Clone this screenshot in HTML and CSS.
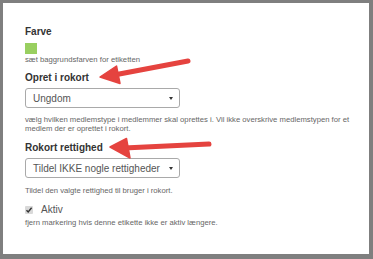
FILE: index.html
```html
<!DOCTYPE html>
<html>
<head>
<meta charset="utf-8">
<link rel="stylesheet" href="styles.css">
</head>
<body>
<div class="panel">
  <div class="label">Farve</div>
  <div class="swatch"></div>
  <div class="help help-tight">sæt baggrundsfarven for etiketten</div>

  <div class="label label-gap">Opret i rokort</div>
  <div class="select"><span class="select-text">Ungdom</span><span class="caret"></span></div>
  <div class="help help-gap">vælg hvilken medlemstype i medlemmer skal oprettes i. Vil ikke overskrive medlemstypen for et medlem der er oprettet i rokort.</div>

  <div class="label label-gap2">Rokort rettighed</div>
  <div class="select select-gap"><span class="select-text">Tildel IKKE nogle rettigheder</span><span class="caret"></span></div>
  <div class="help help-gap2">Tildel den valgte rettighed til bruger i rokort.</div>

  <div class="check-row">
    <span class="checkbox">
      <svg width="8" height="8" viewBox="0 0 8 8"><path d="M1.5 4.2 L3.2 6 L6.6 1.8" fill="none" stroke="#333" stroke-width="1.4"/></svg>
    </span>
    <span class="check-label">Aktiv</span>
  </div>
  <div class="help help-tight2">fjern markering hvis denne etikette ikke er aktiv længere.</div>
</div>
<svg class="arrows" width="373" height="259" viewBox="0 0 373 259">
  <g fill="#e5433f" stroke="#e5433f" stroke-linejoin="round" stroke-linecap="round">
    <line x1="188" y1="61" x2="114" y2="75" stroke-width="5"/>
    <polygon points="100,77 116.5,66 120,83.5" stroke-width="1.5"/>
    <line x1="209" y1="144" x2="124" y2="148" stroke-width="5"/>
    <polygon points="110,147 126.5,138.5 130,158" stroke-width="1.5"/>
  </g>
</svg>
</body>
</html>
```

FILE: styles.css
```css
html, body {
  margin: 0;
  padding: 0;
}
body {
  background: #7f7f7f;
  width: 373px;
  height: 259px;
  overflow: hidden;
  position: relative;
  font-family: "Liberation Sans", Arial, sans-serif;
}
.panel {
  box-sizing: border-box;
  margin: 3px 4px 0 3px;
  width: 366px;
  height: 251px;
  background: #fff;
  padding: 23px 0 0 22px;
}
.label {
  font-size: 10px;
  line-height: 12px;
  font-weight: bold;
  color: #333;
}
.label-gap { margin-top: 8px; }
.label-gap2 { margin-top: 9px; }
.swatch {
  margin-top: 5px;
  width: 12px;
  height: 11px;
  background: #99cf60;
}
.help {
  font-size: 7.7px;
  line-height: 9px;
  color: #666;
  width: 340px;
}
.help-tight { margin-top: 1px; }
.help-gap { margin-top: 7px; }
.help-gap2 { margin-top: 8px; }
.help-tight2 { margin-top: 2px; }
.select {
  box-sizing: border-box;
  margin-top: 4px;
  width: 155px;
  height: 20px;
  border: 1px solid #a9a9a9;
  border-radius: 3px;
  display: flex;
  align-items: center;
  justify-content: space-between;
  padding: 0 6px 0 7px;
}
.select-gap { margin-top: 4px; }
.select-text {
  font-size: 10px;
  color: #555;
}
.caret {
  width: 0;
  height: 0;
  border-left: 2.5px solid transparent;
  border-right: 2.5px solid transparent;
  border-top: 3.5px solid #333;
}
.check-row {
  margin-top: 9px;
  display: flex;
  align-items: center;
  height: 12px;
}
.checkbox {
  box-sizing: border-box;
  width: 8px;
  height: 8px;
  background: #d9d9d9;
  border-radius: 1px;
  display: flex;
  align-items: center;
  justify-content: center;
}
.checkbox svg { display: block; }
.check-label {
  margin-left: 8px;
  font-size: 10px;
  line-height: 12px;
  color: #555;
}
.arrows {
  position: absolute;
  left: 0;
  top: 0;
  pointer-events: none;
}
```
